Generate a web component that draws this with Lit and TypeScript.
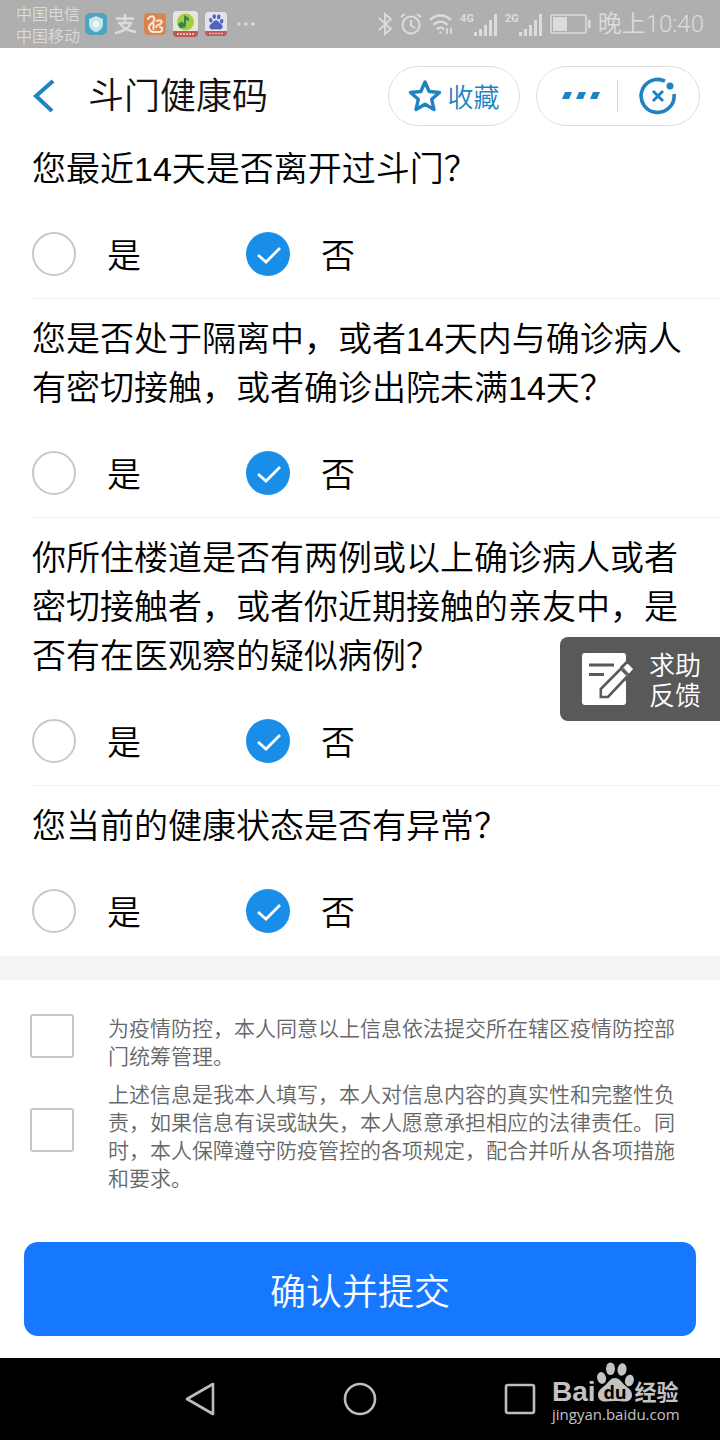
import { LitElement, html, css, svg } from "lit";
import { customElement, property, state } from "lit/decorators.js";

interface Question {
  id: string;
  text: string;
}

const QUESTIONS: Question[] = [
  { id: "left", text: "您最近14天是否离开过斗门？" },
  { id: "contact", text: "您是否处于隔离中，或者14天内与确诊病人有密切接触，或者确诊出院未满14天？" },
  { id: "building", text: "你所住楼道是否有两例或以上确诊病人或者密切接触者，或者你近期接触的亲友中，是否有在医观察的疑似病例？" },
  { id: "state", text: "您当前的健康状态是否有异常？" },
];

const TERMS = [
  "为疫情防控，本人同意以上信息依法提交所在辖区疫情防控部门统筹管理。",
  "上述信息是我本人填写，本人对信息内容的真实性和完整性负责，如果信息有误或缺失，本人愿意承担相应的法律责任。同时，本人保障遵守防疫管控的各项规定，配合并听从各项措施和要求。",
];

const paw = (fill: string) => svg`
  <g fill=${fill}>
    <ellipse cx="4.600" cy="16" rx="4.400" ry="6" transform="rotate(-12 4.600 16)"/>
    <ellipse cx="13.500" cy="6.700" rx="4.500" ry="6.300"/>
    <ellipse cx="25" cy="7.500" rx="4.500" ry="6.300" transform="rotate(8 25 7.500)"/>
    <ellipse cx="32.400" cy="18.500" rx="4.400" ry="5.800" transform="rotate(14 32.400 18.500)"/>
    <path d="M18 16c4 0 6 3 9 6.500 4 3.500 8 5.500 8 10.500s-4 7-9 6.500c-3-.4-5-.6-8-.6s-5 .2-8 .6C5 40 1 38 1 33s4-7 8-10.500c3-3.500 5-6.500 9-6.500z"/>
  </g>`;

@customElement("status-bar")
export class StatusBar extends LitElement {
  static styles = css`
    :host { display: flex; justify-content: space-between; align-items: center; height: 48px; padding: 0 16px; background: #afafaf; color: #dcdcdc; }
    .side { display: flex; align-items: center; gap: 7px; }
    .carriers { font-size: 16px; line-height: 22px; margin-right: -2px; }
    .signal { display: flex; }
    .net { font: 700 11px/12px Roboto, sans-serif; }
    .time { font-family: Roboto, "Noto Sans CJK SC", sans-serif; font-size: 24px; line-height: 32px; }
    svg { display: block; }
  `;

  private bars(net: string) {
    return html`<span class="signal"><span class="net">${net}</span>
      <svg width="24" height="23" viewBox="0 0 24 23" fill="currentColor"><path d="M0 19h3v4H0zM5 16h3v7H5zM10 12h3v11h-3zM15 7h3v16h-3zM20 1h3v22h-3z"/></svg></span>`;
  }

  render() {
    return html`
      <div class="side">
        <div class="carriers"><div>中国电信</div><div>中国移动</div></div>
        <svg width="22" height="22" viewBox="0 0 22 22"><rect width="22" height="22" rx="5" fill="#4ba5c0"/><path d="M11 3l7 3v5c0 4-3 7-7 8.500C7 18 4 15 4 11V6z" fill="#c9e4ec"/><path d="M8 9.500l3-2 3 2v3l-3 2.500-3-2.500z" fill="#f0f7f9"/></svg>
        <svg width="23" height="22" viewBox="0 0 23 22" fill="none" stroke="currentColor" stroke-width="2.300"><path d="M2 5.500h18M11 1v9M4 10h13c-2 5-7 8.500-16 10M6 10.500c3 4 8 7.500 16 8.500"/></svg>
        <svg width="22" height="22" viewBox="0 0 22 22"><rect width="22" height="22" rx="4" fill="#da8450"/><path d="M4 6c1-2 4-3.500 5.500-2s1 4-1 5.500-4 3-3.500 5.500 2.500 4 5 4h6c3-1 3-4.500 0-5M13 8c4-2 6 1 3.500 3-2 1-4 .5-4.500 3M9.500 11v5" fill="none" stroke="#f7e8df" stroke-width="2" stroke-linecap="round"/></svg>
        <svg width="25" height="26" viewBox="0 0 25 26"><rect width="25" height="25" rx="4" fill="#e4e8d8"/><circle cx="12.500" cy="11" r="8.500" fill="#a6cc43"/><path d="M10 16.500a3 3 0 1 1 1-4V4l5 3v3l-3-1v5c0 2-1 3-3 2.500z" fill="#2f8a4b"/><path d="M0 20h25v2a4 4 0 0 1-4 4H4a4 4 0 0 1-4-4z" fill="#bf5658"/><path d="M4 23h17" stroke="#e6b9b9" stroke-width="2" stroke-dasharray="2 1"/></svg>
        <svg width="22" height="24" viewBox="0 0 22 24"><rect width="22" height="23" rx="4" fill="#e3e4ea"/><g transform="translate(4 2) scale(.39)">${paw("#5264c0")}</g><path d="M0 19h22v1a4 4 0 0 1-4 4H4a4 4 0 0 1-4-4z" fill="#c05759"/><path d="M4 21.500h14" stroke="#e6b9b9" stroke-width="1.600" stroke-dasharray="2 1"/></svg>
        <svg width="22" height="6" viewBox="0 0 22 6" fill="currentColor"><circle cx="5" cy="3" r="1.700"/><circle cx="12" cy="3" r="1.700"/><circle cx="19" cy="3" r="1.700"/></svg>
      </div>
      <div class="side">
        <svg width="15" height="24" viewBox="0 0 15 24" fill="none" stroke="currentColor" stroke-width="1.800"><path d="M1 6l12 11-6 5V2l6 5L1 18"/></svg>
        <svg width="22" height="24" viewBox="0 0 22 24" fill="none" stroke="currentColor" stroke-width="2"><circle cx="11" cy="13" r="8.500"/><path d="M11 8v5.500l4 2.500M1 5l4-3M21 5l-4-3"/></svg>
        <svg width="24" height="22" viewBox="0 0 24 22" fill="none" stroke="currentColor" stroke-width="2.300"><path d="M1 7c6-6 15-6 21 0M4.500 12c4-4.500 10-4.500 14 0M8 16.500c2-2.500 5-2.500 7 0"/><circle cx="11.500" cy="19.500" r="1.300" fill="currentColor" stroke="none"/><path d="M18 15v6M22 15v6" stroke-width="1.800"/></svg>
        ${this.bars("4G")} ${this.bars("2G")}
        <svg width="41" height="20" viewBox="0 0 41 20"><rect x="1" y="1" width="35" height="18" rx="1" fill="none" stroke="currentColor" stroke-width="1.600"/><path d="M3 3h14v14H3zM38 6h2.500v8H38z" fill="currentColor"/></svg>
        <span class="time">晚上10:40</span>
      </div>`;
  }
}

@customElement("title-bar")
export class TitleBar extends LitElement {
  static styles = css`
    :host { display: flex; align-items: center; padding: 18px 20px 3px 32px; background: #fff; }
    button { display: flex; align-items: center; justify-content: center; box-sizing: border-box; margin: 0; padding: 0; border: 0; background: none; font: inherit; color: #1e82c3; cursor: pointer; }
    svg { display: block; }
    .title { flex: 1; margin: 0 0 0 32px; font-family: "Noto Sans", "Noto Sans CJK SC", sans-serif; font-size: 36px; line-height: 48px; font-weight: inherit; color: #111; }
    .pill { box-sizing: border-box; height: 60px; border: 1px solid #dedede; border-radius: 30px; }
    .fav { width: 132px; gap: 5px; font-size: 26px; line-height: 32px; }
    .menu { display: flex; align-items: center; width: 164px; margin-left: 16px; }
    .menu button { flex: none; width: 80px; height: 100%; }
    .menu .more { padding-left: 8px; }
    .rule { width: 1px; height: 32px; background: #d6d6d6; }
  `;
  render() {
    return html`
      <button aria-label="返回"><svg width="24" height="34" viewBox="0 0 24 34" fill="none" stroke="currentColor" stroke-width="4"><path d="M21 2L4 17l16 15"/></svg></button>
      <h1 class="title">斗门健康码</h1>
      <button class="pill fav">
        <svg width="34" height="34" viewBox="0 0 34 34" fill="none" stroke="currentColor" stroke-width="3.400" stroke-linejoin="round"><path d="M17 3l4.200 9.500 10.300 1-7.800 6.800 2.300 10.200-9-5.300-9 5.300 2.300-10.200L2.500 13.500l10.300-1z"/></svg>
        <span>收藏</span>
      </button>
      <div class="pill menu">
        <button class="more" aria-label="更多"><svg width="40" height="10" viewBox="0 0 40 10" fill="currentColor"><path d="M4 1h7L8 8H1zM18 1h7l-3 7h-7zM32 1h7l-3 7h-7z"/></svg></button>
        <span class="rule"></span>
        <button aria-label="关闭"><svg width="38" height="38" viewBox="0 0 38 38" fill="none" stroke="currentColor" stroke-width="3.600"><path d="M26 4.200A16.500 16.500 0 1 0 35 17"/><path d="M14 14l10 10M24 14L14 24" stroke-width="3"/><circle cx="31" cy="9" r="3.500" fill="currentColor" stroke="none"/></svg></button>
      </div>`;
  }
}

@customElement("yes-no-question")
export class YesNoQuestion extends LitElement {
  static styles = css`
    :host { display: block; padding-left: 32px; }
    .block { margin: 0; padding: 0 32px 22px 0; border: 0; border-bottom: 1px solid #f0f0f0; min-width: 0; }
    :host([last]) .block { border-bottom-color: transparent; }
    .text { display: block; padding: 16px 0 0; font-family: "Liberation Sans", "Noto Sans CJK SC", sans-serif; font-size: 34px; line-height: 49px; color: #000; }
    .options { display: grid; grid-template-columns: 214px 214px; margin-top: 38px; }
    .option { display: flex; align-items: center; gap: 31px; height: 44px; font-size: 34px; line-height: 44px; color: #000; }
    .radio { appearance: none; box-sizing: border-box; width: 44px; height: 44px; margin: 0; border: 2px solid #c8c8c8; border-radius: 50%; background: #fff; }
    .radio:checked { border: 0; background: #188ee8 url("data:image/svg+xml,%3Csvg xmlns='http://www.w3.org/2000/svg' viewBox='0 0 44 44' fill='none' stroke='%23fff' stroke-width='2.800'%3E%3Cpath d='M12 23l8 7 14-14'/%3E%3C/svg%3E") center / 44px 44px no-repeat; }
  `;
  @property({ attribute: false }) question!: Question;
  @state() private answer = "否";

  render() {
    return html`<fieldset class="block">
      <legend class="text">${this.question.text}</legend>
      <div class="options">
        ${["是", "否"].map((o) => html`<label class="option">
          <input class="radio" type="radio" name=${this.question.id} .value=${o} .checked=${this.answer === o} @change=${() => (this.answer = o)} />${o}
        </label>`)}
      </div>
    </fieldset>`;
  }
}

@customElement("system-nav")
export class SystemNav extends LitElement {
  static styles = css`
    :host { display: flex; position: relative; align-items: center; justify-content: center; gap: 124px; height: 82px; background: #000; color: #bdbdbd; }
    button { width: 36px; height: 36px; padding: 0; border: 0; background: none; color: inherit; }
    svg { display: block; }
    .mark { position: absolute; right: 38px; top: 4px; width: 130px; color: #c3c3c3; }
    .brand { display: flex; align-items: flex-end; height: 42px; }
    .bai { font: 700 28px/32px "Liberation Sans", sans-serif; margin-bottom: -4px; }
    .paw { flex: none; margin: 0 1px; }
    .exp { font-size: 22px; line-height: 26px; font-weight: 700; margin-bottom: 1px; }
    .du { font: 700 18px "Open Sans", sans-serif; }
    .site { font: 15px/20px "Open Sans", sans-serif; }
  `;
  render() {
    return html`
      <button aria-label="后退"><svg width="36" height="36" viewBox="0 0 36 36" fill="none" stroke="currentColor" stroke-width="2.600" stroke-linejoin="round"><path d="M31 3v30L5 18z"/></svg></button>
      <button aria-label="主页"><svg width="36" height="36" viewBox="0 0 36 36" fill="none" stroke="currentColor" stroke-width="2.600"><circle cx="18" cy="18" r="15"/></svg></button>
      <button aria-label="最近任务"><svg width="36" height="36" viewBox="0 0 36 36" fill="none" stroke="currentColor" stroke-width="2.600"><rect x="4" y="4" width="28" height="28" rx="2"/></svg></button>
      <div class="mark">
        <div class="brand">
          <span class="bai">Bai</span>
          <svg class="paw" width="37" height="42" viewBox="0 0 37 42">${paw("#c3c3c3")}<text class="du" x="18" y="37" text-anchor="middle" fill="#000">du</text></svg>
          <span class="exp">经验</span>
        </div>
        <div class="site">jingyan.baidu.com</div>
      </div>`;
  }
}

@customElement("app-root")
export class AppRoot extends LitElement {
  static styles = css`
    :host { display: flex; flex-direction: column; position: relative; min-height: 100vh; background: #fff; font-family: "Noto Sans CJK SC", sans-serif; font-weight: 350; }
    .form { display: flex; flex-direction: column; flex: 1; }
    .terms { display: flex; flex-direction: column; gap: 10px; padding: 33px 32px 0 30px; border-top: 24px solid #f4f4f4; }
    .term { display: flex; align-items: center; gap: 34px; font-size: 21px; line-height: 28px; color: #666; }
    .tick { appearance: none; flex: none; box-sizing: border-box; width: 44px; height: 44px; margin: 0 0 10px; border: 2px solid #c6c6c6; border-radius: 3px; background: #fff; }
    .tick:checked { background: #188ee8; }
    .submit { margin: 51px 24px 22px; height: 94px; border: 0; border-radius: 14px; background: #1677ff; color: #fff; font: inherit; font-size: 36px; line-height: 48px; }
    .help { position: absolute; right: 0; top: 637px; display: flex; align-items: center; gap: 16px; box-sizing: border-box; width: 160px; height: 84px; padding: 0 16px 0 22px; border: 0; border-radius: 8px 0 0 8px; background: #595959; color: #fff; font: inherit; font-size: 26px; line-height: 30px; text-align: left; }
    .help svg { flex: none; }
    .help span { flex: none; width: 52px; }
  `;
  render() {
    return html`
      <status-bar></status-bar>
      <title-bar></title-bar>
      <form class="form" @submit=${(e: Event) => e.preventDefault()}>
        ${QUESTIONS.map((q, i) => html`<yes-no-question .question=${q} ?last=${i === QUESTIONS.length - 1}></yes-no-question>`)}
        <div class="terms">
          ${TERMS.map((t) => html`<label class="term"><input class="tick" type="checkbox" /><span>${t}</span></label>`)}
        </div>
        <button class="submit">确认并提交</button>
      </form>
      <button class="help">
        <svg width="51" height="52" viewBox="0 0 51 52"><rect width="44" height="52" rx="3" fill="#fff"/><path d="M7 12h25M7 21.500h15" stroke="#595959" stroke-width="3"/><path d="M38 14l8-8h5v16l-7 7z" fill="#595959"/><path d="M18.800 36L41 13.500l7 7-22 23.500h-7.200z" fill="#fff" stroke="#595959" stroke-width="2.600"/><path d="M39 17.500L41 15.500l5 5-2 2z" fill="#595959"/><path d="M42 14.500l3.500-3.500 5 5-3.500 4z" fill="#fff" stroke="#fff" stroke-linejoin="round"/></svg>
        <span>求助反馈</span>
      </button>
      <system-nav></system-nav>`;
  }
}
